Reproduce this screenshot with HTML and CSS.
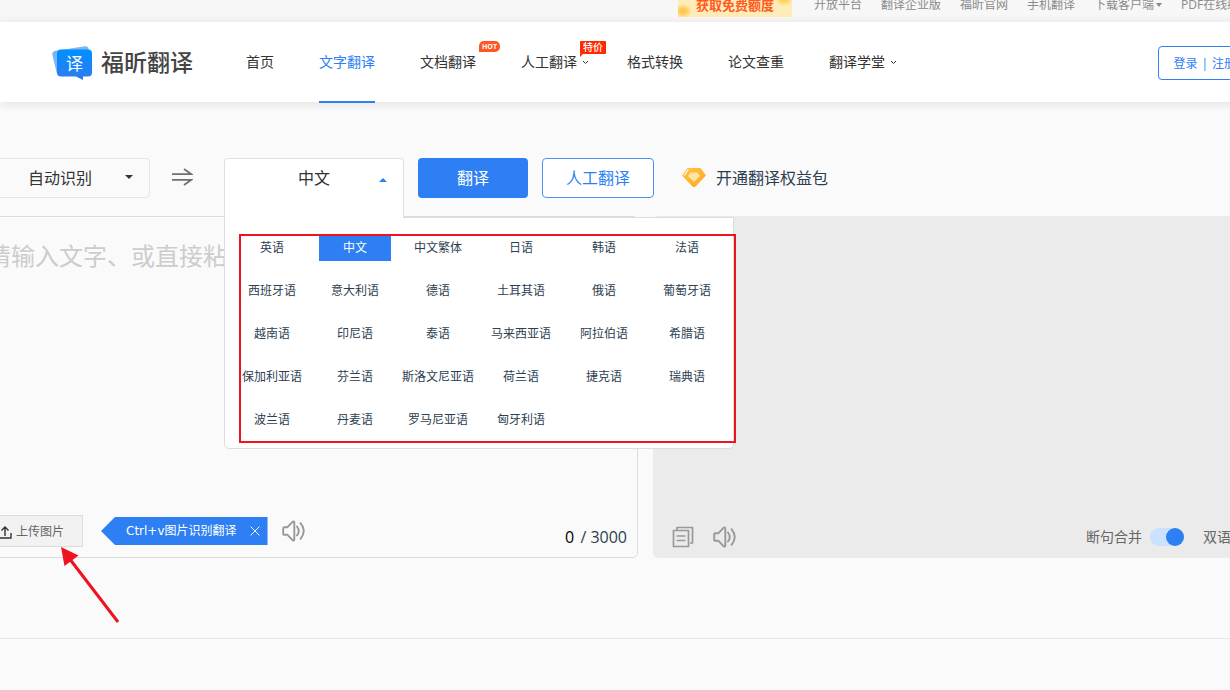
FILE: index.html
```html
<!DOCTYPE html>
<html lang="zh-CN">
<head>
<meta charset="utf-8">
<title>福昕翻译</title>
<link rel="stylesheet" href="styles.css">
</head>
<body>
<svg class="sprite" aria-hidden="true">
  <symbol id="speaker" viewBox="0 0 24 22">
    <path d="M1.200 8.200q0-1 1-1H5.500L10.500 1.800q1.800-1 1.800 .6V19.600q0 1.600-1.800 .600L5.500 14.800H2.200q-1 0-1-1zM15 6.500Q18.500 11 15 15.500M18.500 3.200Q25 11 18.500 18.800" fill="none" stroke="currentColor" stroke-width="1.900" stroke-linecap="round" stroke-linejoin="round"/>
  </symbol>
</svg>
<div class="page">
  <div class="topbar">
    <nav class="topbar-links">
      <a class="promo" href="#">获取免费额度</a>
      <a href="#">开放平台</a>
      <a href="#">翻译企业版</a>
      <a href="#">福昕官网</a>
      <a href="#">手机翻译</a>
      <a class="with-caret" href="#">下载客户端<i class="caret"></i></a>
      <a href="#">PDF在线编辑</a>
    </nav>
  </div>
  <header class="header">
    <a class="logo" href="#">
      <svg width="40" height="34" viewBox="0 0 40 34" aria-hidden="true">
        <defs><linearGradient id="lg" x1="0" y1="0" x2="0" y2="1"><stop offset="0" stop-color="#0090ff"/><stop offset="1" stop-color="#2f7bf0"/></linearGradient></defs>
        <path d="M2.500 5L33 .3q3-.4 3.800 3L38 10 30 29H8q-3 0-3.500-3L.3 8.500Q0 5.500 2.500 5z" fill="#74b8fb"/>
        <path d="M9 3.500H36q4 0 4 4V26.500q0 4-4 4H31V34L24 30.500H9q-4 0-4-4V7.500q0-4 4-4z" fill="url(#lg)"/>
        <text x="22.500" y="23.500" text-anchor="middle" class="logo-mark">译</text>
      </svg>
      <span class="logo-name">福昕翻译</span>
    </a>
    <nav class="nav">
      <a href="#">首页</a>
      <a class="active" href="#">文字翻译</a>
      <a href="#">文档翻译<span class="badge hot">HOT</span></a>
      <a class="more" href="#">人工翻译<svg class="chevron" width="7" height="5" viewBox="0 0 7 5"><path d="M1 1l2.500 2.500L6 1" fill="none" stroke="currentColor"/></svg><span class="badge sale">特价</span></a>
      <a href="#">格式转换</a>
      <a href="#">论文查重</a>
      <a class="more" href="#">翻译学堂<svg class="chevron" width="7" height="5" viewBox="0 0 7 5"><path d="M1 1l2.500 2.500L6 1" fill="none" stroke="currentColor"/></svg></a>
    </nav>
    <button class="login" type="button"><span>登录</span><span>|</span><span>注册</span></button>
  </header>

  <main class="workspace">
    <div class="toolbar">
      <div class="source">
        <select aria-label="源语言"><option>自动识别</option><option>英语</option><option>中文</option></select>
        <i class="caret"></i>
      </div>
      <button class="swap" type="button" aria-label="交换语言">
        <svg width="21" height="18" viewBox="0 0 21 18"><path d="M0 6.200H19.500L12 1M0 11.800H19.500L12 17" fill="none" stroke="#707070" stroke-width="1.800"/></svg>
      </button>
      <div class="target">
        <button class="target-tab" type="button" aria-expanded="true">中文<i class="caret up"></i></button>
        <div class="menu" role="listbox" aria-label="目标语言">
          <button role="option">英语</button>
          <button role="option" aria-selected="true">中文</button>
          <button role="option">中文繁体</button>
          <button role="option">日语</button>
          <button role="option">韩语</button>
          <button role="option">法语</button>
          <button role="option">西班牙语</button>
          <button role="option">意大利语</button>
          <button role="option">德语</button>
          <button role="option">土耳其语</button>
          <button role="option">俄语</button>
          <button role="option">葡萄牙语</button>
          <button role="option">越南语</button>
          <button role="option">印尼语</button>
          <button role="option">泰语</button>
          <button role="option">马来西亚语</button>
          <button role="option">阿拉伯语</button>
          <button role="option">希腊语</button>
          <button role="option">保加利亚语</button>
          <button role="option">芬兰语</button>
          <button role="option">斯洛文尼亚语</button>
          <button role="option">荷兰语</button>
          <button role="option">捷克语</button>
          <button role="option">瑞典语</button>
          <button role="option">波兰语</button>
          <button role="option">丹麦语</button>
          <button role="option">罗马尼亚语</button>
          <button role="option">匈牙利语</button>
          <div class="menu-outline"></div>
        </div>
      </div>
      <button class="btn primary" type="button">翻译</button>
      <button class="btn outline" type="button">人工翻译</button>
      <a class="vip" href="#">
        <svg width="24" height="20" viewBox="0 0 24 20" aria-hidden="true">
          <defs><linearGradient id="gem" x1="0" y1="0" x2="1" y2="1"><stop offset="0" stop-color="#ffc643"/><stop offset="1" stop-color="#ffa51f"/></linearGradient></defs>
          <path d="M5.500 0H18.500L24 7.500 13.500 18.500q-1.500 1.200-3 0L0 7.500z" fill="url(#gem)"/>
          <path d="M8.500 4.500H15.500L18 8 12 14 6 8z" fill="#ffe2a6"/>
          <path d="M2.500 7L6 2" stroke="#fff" stroke-width="1.200" stroke-linecap="round"/>
        </svg>开通翻译权益包
      </a>
    </div>

    <div class="panels">
      <section class="panel input-panel">
        <textarea aria-label="原文" placeholder="请输入文字、或直接粘贴文字"></textarea>
        <div class="input-tools">
          <button class="upload" type="button">
            <svg width="14" height="13" viewBox="0 0 14 13"><path d="M1 7V12H13V7M7 10V1.500M3.500 4.500L7 1l3.500 3.500" fill="none" stroke="#333" stroke-width="1.400"/></svg>上传图片
            <svg class="pointer" width="62" height="80" viewBox="0 0 62 80" aria-hidden="true"><path d="M2 2L19.500 10.500 5.500 21z" fill="#ed1420"/><path d="M10 13L59 77" stroke="#ed1420" stroke-width="3"/></svg>
          </button>
          <div class="tip"><span><span class="keys">Ctrl+v</span>图片识别翻译</span>
            <button type="button" aria-label="关闭"><svg width="10" height="10" viewBox="0 0 10 10"><path d="M.5 .5l9 9M9.500 .5l-9 9" stroke="#fff" stroke-width=".9"/></svg></button>
          </div>
          <button class="icon" type="button" aria-label="朗读原文"><svg width="24" height="22"><use href="#speaker"/></svg></button>
          <div class="counter"><b>0</b> / 3000</div>
        </div>
      </section>
      <section class="panel output-panel">
        <div class="output-tools">
          <button class="icon" type="button" aria-label="复制"><svg width="22" height="22" viewBox="0 0 22 22"><path d="M5 4V1.500H20.500V17H18M1.500 4.500H16.500V20.500H1.500zM4.500 10H13.500M4.500 14.500H13.500" fill="none" stroke="currentColor" stroke-width="1.700" stroke-linejoin="round"/></svg></button>
          <button class="icon" type="button" aria-label="朗读译文"><svg width="24" height="22"><use href="#speaker"/></svg></button>
          <label class="toggle first">断句合并<input type="checkbox" role="switch" checked></label>
          <label class="toggle">双语对照<input type="checkbox" role="switch"></label>
        </div>
      </section>
    </div>
  </main>
  <footer class="footer"></footer>
</div>
</body>
</html>
```

FILE: styles.css
```css
* { box-sizing: border-box; }

html { overflow: hidden; background: #fafafa; }

body {
  margin: 0;
  overflow: hidden;
  color: #333;
  font: 14px/20px "Open Sans", "Noto Sans CJK SC", sans-serif;
}

button, select, textarea { font: inherit; color: inherit; }
button { padding: 0; border: 0; background: none; cursor: pointer; }
a { color: inherit; text-decoration: none; white-space: nowrap; }
svg { display: block; flex: none; }

.sprite { position: absolute; width: 0; height: 0; }
.page { min-width: 1321px; }

.caret {
  flex: none;
  border: 4px solid transparent;
  border-top-color: currentColor;
  border-bottom: 0;
}
.caret.up {
  color: #2d7ff3;
  border-top: 0;
  border-bottom: 4px solid currentColor;
}

/* Top bar */
.topbar { height: 22px; overflow: hidden; background: #f7f7f7; }
.topbar-links {
  display: flex;
  align-items: center;
  gap: 19px;
  height: 34px;
  margin-top: -12px;
  padding-left: 678px;
  color: #8a8a8a;
  font-size: 12px;
}
.promo {
  width: 114px;
  margin-right: 3px;
  line-height: 24px;
  color: #ff5a1f;
  font-size: 13px;
  font-weight: 700;
  text-align: center;
  background:
    radial-gradient(ellipse 9px 7px at 5px 18px, #ffc94f 30%, transparent),
    radial-gradient(ellipse 9px 6px at 106px 7px, #ffd45c 30%, transparent),
    #ffecb8;
}
.with-caret { display: flex; align-items: center; gap: 2px; }
.with-caret .caret { border-width: 4px 3px 0; }

/* Header */
.header {
  position: relative;
  display: flex;
  align-items: center;
  height: 80px;
  padding: 0 69px 0 52px;
  background: #fff;
  box-shadow: 0 2px 10px rgba(0, 0, 0, .1);
}
.logo { display: flex; align-items: center; gap: 9px; width: 194px; padding-top: 1px; }
.logo-mark { font-size: 17px; fill: #fff; }
.logo-name { padding-bottom: 2px; color: #444; font-size: 23px; font-weight: 500; line-height: 30px; }
.nav { display: flex; gap: 45px; line-height: 80px; }
.nav a { position: relative; }
.nav .active { color: #2d7ff3; }
.nav .active::after {
  content: "";
  position: absolute;
  right: 0;
  bottom: -1px;
  left: 0;
  height: 2px;
  background: #2d7ff3;
}
.nav .more { padding-right: 5px; }
.chevron { position: absolute; top: 38px; right: -7px; }
.badge { position: absolute; color: #fff; text-align: center; }
.hot {
  top: 19px;
  left: 59px;
  width: 21px;
  border-radius: 5px 5px 5px 0;
  background: #ff5722;
  font-size: 7px;
  font-weight: 700;
  line-height: 11px;
}
.sale {
  top: 19px;
  left: 59px;
  width: 26px;
  border-radius: 1px;
  background: #ff2a00;
  font-size: 10px;
  font-weight: 500;
  line-height: 13px;
}
.sale::after {
  content: "";
  position: absolute;
  top: 13px;
  left: 0;
  border-top: 3px solid #ff2a00;
  border-right: 3px solid transparent;
}
.login {
  display: flex;
  align-items: center;
  gap: 4px;
  height: 34px;
  margin: 2px 0 0 auto;
  padding: 2px 15px 0 14px;
  border: 1px solid #2d7ff3;
  border-radius: 4px;
  color: #2d7ff3;
  font-size: 12px;
}

/* Toolbar */
.workspace { margin-left: -30px; padding-top: 56px; }
.toolbar { display: flex; align-items: flex-start; height: 58px; font-size: 16px; }
.source { position: relative; width: 180px; }
.source select {
  width: 100%;
  height: 40px;
  border: 1px solid #e5e5e5;
  border-radius: 4px;
  background: #fafafa;
  text-align: center;
  text-align-last: center;
  appearance: none;
}
.source .caret { position: absolute; top: 17px; right: 17px; }
.swap { display: flex; align-items: center; justify-content: center; width: 64px; height: 38px; margin-right: 10px; }
.target { position: relative; z-index: 2; width: 180px; }
.target-tab {
  position: relative;
  z-index: 1;
  display: block;
  width: 100%;
  height: 60px;
  padding-bottom: 22px;
  border: 1px solid #e0e0e0;
  border-bottom: 0;
  border-radius: 4px 4px 0 0;
  background: #fff;
}
.target-tab .caret { position: absolute; top: 19px; right: 16px; }
.menu {
  position: absolute;
  top: 59px;
  left: 0;
  display: grid;
  grid-template-columns: repeat(6, 72px);
  gap: 17px 11px;
  width: 510px;
  padding: 17px 11px 15px;
  border: 1px solid #dcdcdc;
  border-radius: 0 0 5px 5px;
  background: #fff;
  color: #2c3e50;
  font-size: 12px;
}
.menu button { height: 26px; white-space: nowrap; }
.menu [aria-selected="true"] { background: #2d7ff3; color: #fff; }
.menu-outline {
  position: absolute;
  inset: 16px -3px 5px 14px;
  border: 2px solid #ed1420;
  pointer-events: none;
}
.btn { height: 40px; margin-left: 14px; border-radius: 4px; }
.primary { width: 110px; background: #2d7ff3; color: #fff; }
.outline { width: 112px; border: 1px solid #4a90f5; background: #fff; color: #2d7ff3; }
.vip {
  display: flex;
  align-items: center;
  gap: 10px;
  height: 40px;
  margin-left: 28px;
  color: #2c3e50;
}

/* Panels */
.panels { display: grid; grid-template-columns: 1fr 1fr; gap: 15px; }
.panel { display: flex; flex-direction: column; min-height: 342px; border-radius: 5px; }
.input-panel { border: 1px solid #dcdcdc; }
.input-panel textarea {
  flex: 1;
  padding: 22px 16px;
  border: 0;
  outline: 0;
  background: none;
  font-size: 24px;
  line-height: 34px;
  resize: none;
}
textarea::placeholder { color: #ccc; }
.input-tools { display: flex; align-items: center; padding: 0 10px 10px 18px; }
.upload {
  position: relative;
  display: flex;
  align-items: center;
  justify-content: flex-end;
  gap: 4px;
  width: 94px;
  height: 32px;
  padding: 2px 18px 0 0;
  border: 1px solid #dcdcdc;
  background: #f2f2f2;
  color: #666;
  font-size: 12px;
}
.pointer { position: absolute; top: 29px; left: 69px; pointer-events: none; }
.tip {
  display: flex;
  align-items: center;
  gap: 13px;
  height: 28px;
  margin-left: 18px;
  padding: 0 8px 0 25px;
  background: #2d7ff3;
  clip-path: polygon(0 50%, 14px 0, 100% 0, 100% 100%, 14px 100%);
  color: #fff;
  font-size: 12px;
  white-space: nowrap;
}
.keys { font-family: "DejaVu Sans", sans-serif; }
.icon { color: #999; }
.input-tools .icon { margin-left: 14px; }
.counter { margin-left: auto; padding-top: 12px; color: #2c3e50; font-size: 16px; }
.counter b { margin-right: 2px; color: #000; font-weight: 400; }
.output-panel { justify-content: flex-end; background: #ebebeb; }
.output-tools {
  display: flex;
  align-items: center;
  gap: 19px;
  padding: 0 20px 10px 19px;
  color: #666;
}
.toggle { display: flex; align-items: center; gap: 8px; white-space: nowrap; }
.toggle.first { margin-left: auto; }
.toggle input {
  display: flex;
  align-items: center;
  width: 34px;
  height: 18px;
  margin: 0;
  border-radius: 9px;
  background: #cce0ff;
  appearance: none;
}
.toggle input::before {
  content: "";
  width: 18px;
  height: 18px;
  border-radius: 50%;
  background: #aaa;
}
.toggle input:checked::before { margin-left: auto; background: #2d7ff3; }

.footer { height: 52px; margin-top: 80px; border-top: 1px solid #e8e8e8; }
```
